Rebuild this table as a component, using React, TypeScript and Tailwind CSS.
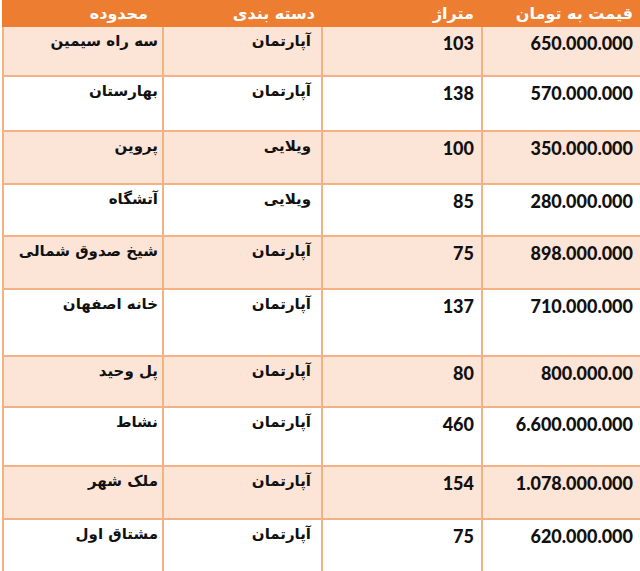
import React from 'react';

interface Row {
  price: string;
  area: string;
  type: string;
  zone: string;
  h: string;
}

// heights measured from the reference, bottom border included
const ROWS: Row[] = [
  { price: '650.000.000', area: '103', type: 'آپارتمان', zone: 'سه راه سیمین', h: 'h-[50px]' },
  { price: '570.000.000', area: '138', type: 'آپارتمان', zone: 'بهارستان', h: 'h-[55px]' },
  { price: '350.000.000', area: '100', type: 'ویلایی', zone: 'پروین', h: 'h-[53px]' },
  { price: '280.000.000', area: '85', type: 'ویلایی', zone: 'آتشگاه', h: 'h-[52px]' },
  { price: '898.000.000', area: '75', type: 'آپارتمان', zone: 'شیخ صدوق شمالی', h: 'h-[53px]' },
  { price: '710.000.000', area: '137', type: 'آپارتمان', zone: 'خانه اصفهان', h: 'h-[67px]' },
  { price: '800.000.00', area: '80', type: 'آپارتمان', zone: 'پل وحید', h: 'h-[51px]' },
  { price: '6.600.000.000', area: '460', type: 'آپارتمان', zone: 'نشاط', h: 'h-[59px]' },
  { price: '1.078.000.000', area: '154', type: 'آپارتمان', zone: 'ملک شهر', h: 'h-[53px]' },
  { price: '620.000.000', area: '75', type: 'آپارتمان', zone: 'مشتاق اول', h: 'h-[51px]' },
];

const num = "font-['Lato',sans-serif] font-black text-[18px] leading-none text-[#111]";
const fa = "font-['DejaVu_Sans',sans-serif] font-bold text-[15px] leading-none text-[#111]";

const App: React.FC = () => {
  return (
    <div dir="rtl" className="w-[640px] h-[571px] overflow-hidden bg-white pl-[2px]">
      {/* Header */}
      <div className="grid grid-cols-[159px_160px_159px_160px] h-[27px] bg-[#ed7d31] text-white font-['DejaVu_Sans',sans-serif] font-bold text-[16px] items-center">
        <div className="pr-[7px]">قیمت به تومان</div>
        <div className="pr-[7px]">متراژ</div>
        <div className="pr-[6px]">دسته بندی</div>
        <div className="pr-[14px]">محدوده</div>
      </div>

      {/* Body */}
      {ROWS.map((r, i) => {
        const cell = `border-l-2 border-[#f4b183] ${i < ROWS.length - 1 ? 'border-b-2' : ''}`;
        return (
          <div
            key={i}
            className={`grid grid-cols-[159px_160px_159px_160px] ${r.h} ${i % 2 === 0 ? 'bg-[#fce4d6]' : 'bg-white'}`}
          >
            <div className={`${cell} pr-[7px] pt-[5px]`}><span dir="ltr" className={num}>{r.price}</span></div>
            <div className={`${cell} pr-[7px] pt-[5px]`}><span dir="ltr" className={num}>{r.area}</span></div>
            <div className={`${cell} pr-[10px] pt-[1px]`}><span className={fa}>{r.type}</span></div>
            <div className={`${cell} pr-[4px] pt-[1px]`}><span className={fa}>{r.zone}</span></div>
          </div>
        );
      })}
    </div>
  );
};

export default App;
